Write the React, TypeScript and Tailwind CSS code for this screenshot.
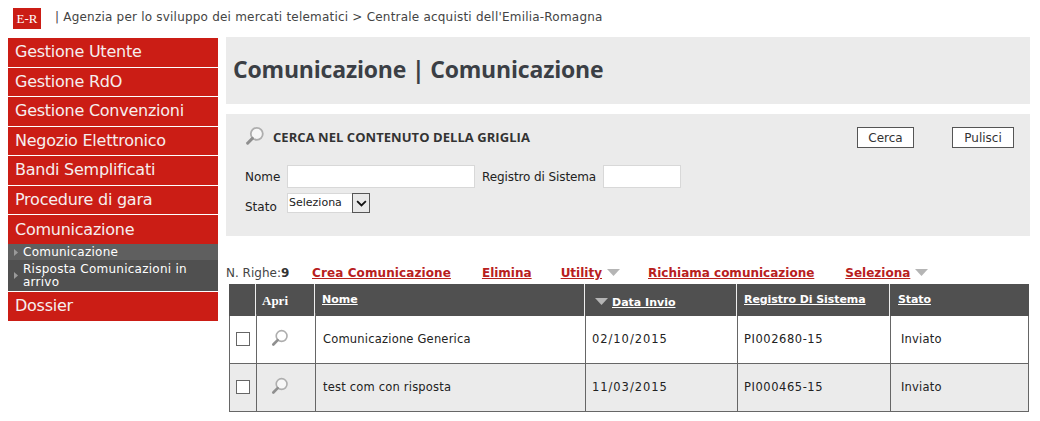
import React from "react";

const dejavu = "font-['DejaVu_Sans','Verdana',sans-serif]";

function Lens({ className, color = "#8f8f8f" }: { className?: string; color?: string }) {
  return (
    <svg viewBox="0 0 20 20" className={className} fill="none">
      <circle cx="11.8" cy="7.8" r="6" stroke="#aeaeae" strokeWidth="1.8" fill="#ffffff" fillOpacity="0.6" />
      <path d="M7.4 12.4 L2.6 17.2" stroke={color} strokeWidth="3" strokeLinecap="round" />
    </svg>
  );
}

function Tri() {
  return (
    <svg viewBox="0 0 13 7" className="w-[13px] h-[7px] inline-block">
      <path d="M0 0 H13 L6.5 7 Z" fill="#b5b5b5" />
    </svg>
  );
}

function Caret() {
  return (
    <svg viewBox="0 0 4 7" className="w-[4px] h-[7px] shrink-0">
      <path d="M0 0 L4 3.5 L0 7 Z" fill="#9a9a9a" />
    </svg>
  );
}

const menuTop = ["Gestione Utente", "Gestione RdO", "Gestione Convenzioni", "Negozio Elettronico", "Bandi Semplificati", "Procedure di gara"];

function MenuItem({ label }: { label: string }) {
  return (
    <div className="h-[28.5px] mb-[1px] bg-[#cb1d15] text-[#f6eeee] text-[16px] tracking-[-0.25px] leading-[27px] pl-[7px] whitespace-nowrap">
      {label}
    </div>
  );
}

const rows = [
  { name: "Comunicazione Generica", date: "02/10/2015", reg: "PI002680-15", stato: "Inviato", bg: "bg-white" },
  { name: "test com con risposta", date: "11/03/2015", reg: "PI000465-15", stato: "Inviato", bg: "bg-[#ebebeb]" },
];

const grid = "grid grid-cols-[27px_59px_270px_152px_153px_1fr]";

export default function App() {
  return (
    <div className={`w-[1040px] h-[421px] bg-white overflow-hidden text-[#333] ${dejavu}`}>
      <header className="h-[38px] flex items-start pl-[13px] pt-[8px]">
        <div className="w-[28px] h-[21px] bg-[#cb1d15] text-white text-[13px] leading-[21px] text-center font-['Liberation_Serif',serif]">E-R</div>
        <div className="ml-[14px] text-[12px] tracking-[0.21px] leading-[18px] text-[#444] whitespace-nowrap">| Agenzia per lo sviluppo dei mercati telematici &gt; Centrale acquisti dell'Emilia-Romagna</div>
      </header>
      <div className="flex items-start pl-[8px]">
        <nav className="w-[210px] shrink-0">
          {menuTop.map((m) => (
            <MenuItem key={m} label={m} />
          ))}
          <div className="h-[29px] bg-[#cb1d15] text-[#f6eeee] text-[16px] tracking-[-0.25px] leading-[30px] pl-[7px]">Comunicazione</div>
          <div className="bg-[#5f5f5f] h-[16px] flex items-center pl-[6px] gap-[5px] text-white text-[12px] tracking-[0.25px] leading-[18px]">
            <Caret />
            <span>Comunicazione</span>
          </div>
          <div className="bg-[#505050] h-[31px] mb-[1px] flex items-center pl-[6px] gap-[5px] text-white text-[12px] tracking-[0.25px] leading-[13px]">
            <Caret />
            <span>Risposta Comunicazioni in<br />arrivo</span>
          </div>
          <MenuItem label="Dossier" />
        </nav>
        <main className="w-[804px] ml-[8px] -mt-[1px]">
          <div className="h-[67px] bg-[#ebebeb] pl-[7px] text-[23px] tracking-[-0.19px] leading-[65px] font-bold text-[#3b3f45] font-['Open_Sans',sans-serif] whitespace-nowrap">
            Comunicazione | Comunicazione
          </div>
          <section className="mt-[10px] h-[122px] bg-[#ebebeb] pl-[19px] pr-[16px] pt-[13px]">
            <div className="flex items-center h-[20px]">
              <Lens className="w-[20px] h-[20px] -mt-[3px]" />
              <span className="ml-[8px] mt-[2px] text-[13px] font-bold text-[#333] tracking-[0.05px] font-['Open_Sans',sans-serif] whitespace-nowrap">CERCA NEL CONTENUTO DELLA GRIGLIA</span>
              <button className="ml-auto mt-[1px] w-[57px] h-[21px] border border-[#555] bg-white text-[12px] leading-[20px] text-[#333]">Cerca</button>
              <button className="ml-[38px] mt-[1px] w-[62px] h-[21px] border border-[#555] bg-white text-[12px] leading-[20px] text-[#333]">Pulisci</button>
            </div>
            <div className="flex items-center mt-[18px] text-[12px] text-[#222]">
              <span className="w-[42px]">Nome</span>
              <div className="w-[188px] h-[23px] bg-white border border-[#d8d8d8]" />
              <span className="ml-[7px] w-[121px] tracking-[-0.1px] whitespace-nowrap">Registro di Sistema</span>
              <div className="w-[78px] h-[23px] bg-white border border-[#d8d8d8]" />
            </div>
            <div className="flex items-start mt-[5px] text-[12px] text-[#222]">
              <span className="w-[42px] pt-[5px]">Stato</span>
              <div className="w-[83px] h-[20px] bg-white border border-[#d8d8d8] flex items-center justify-between text-[11px] pl-[1px]">
                <span className="mt-[0px]">Seleziona</span>
                <span className="w-[18px] h-[20px] -mr-[1px] border border-[#555] bg-[#e8e8e8] flex items-center justify-center">
                  <svg viewBox="0 0 12 8" className="w-[11px] h-[7px]">
                    <path d="M1 1.2 L6 6.2 L11 1.2" fill="none" stroke="#111" strokeWidth="2" />
                  </svg>
                </span>
              </div>
            </div>
          </section>
          <div className="mt-[27px] h-[20px] flex items-center text-[12px] whitespace-nowrap">
            <span className="text-[#444] w-[86px]">N. Righe:<b className="text-[#333]">9</b></span>
            <a className="font-bold text-[#b8201d] underline tracking-[0.1px]">Crea Comunicazione</a>
            <a className="ml-[31px] font-bold text-[#b8201d] underline">Elimina</a>
            <a className="ml-[29px] font-bold text-[#b8201d] underline">Utility</a>
            <span className="ml-[5px] -mt-[2px] flex"><Tri /></span>
            <a className="ml-[28px] font-bold text-[#b8201d] underline">Richiama comunicazione</a>
            <a className="ml-[31px] font-bold text-[#b8201d] underline">Seleziona</a>
            <span className="ml-[5px] -mt-[2px] flex"><Tri /></span>
          </div>
          <div className="ml-[3px] mt-[1px] w-[800px] border-x border-b border-[#666]">
            <div className={`${grid} h-[32px] -mx-[1px] bg-[#505050] text-white text-[11px] font-bold`}>
              <div className="border-r border-[#eee]" />
              <div className="border-r border-[#eee] pl-[6px] pt-[7px] font-['Liberation_Serif',serif] text-[13px]">Apri</div>
              <div className="border-r border-[#eee] pl-[7px] pt-[8px] underline">Nome</div>
              <div className="border-r border-[#eee] pl-[10px] pt-[11px] flex items-start gap-[4px]">
                <span className="mt-[3px] flex"><Tri /></span>
                <span className="underline">Data Invio</span>
              </div>
              <div className="border-r border-[#eee] pl-[7px] pt-[8px] underline tracking-[-0.06px] whitespace-nowrap">Registro Di Sistema</div>
              <div className="pl-[8px] pt-[8px] underline tracking-[-0.1px]">Stato</div>
            </div>
            {rows.map((r, i) => (
              <div key={r.reg} className={`${grid} ${i === 0 ? "h-[48px] border-b border-[#666]" : "h-[47px]"} ${r.bg} text-[11.5px] text-[#222] tracking-[0.2px]`}>
                <div className="border-r border-[#666] flex items-center justify-center -mt-[2px]">
                  <span className="w-[14px] h-[14px] border border-[#666] bg-white" />
                </div>
                <div className="border-r border-[#666] flex items-center justify-center pr-[12px] -mt-[3px]">
                  <Lens className="w-[18px] h-[18px]" />
                </div>
                <div className="border-r border-[#666] pl-[7px] leading-[46px]">{r.name}</div>
                <div className="border-r border-[#666] pl-[6px] leading-[46px] tracking-[0.95px]">{r.date}</div>
                <div className="border-r border-[#666] pl-[6px] leading-[46px] tracking-[0.55px]">{r.reg}</div>
                <div className="pl-[10px] leading-[47px]">{r.stato}</div>
              </div>
            ))}
          </div>
        </main>
      </div>
    </div>
  );
}
